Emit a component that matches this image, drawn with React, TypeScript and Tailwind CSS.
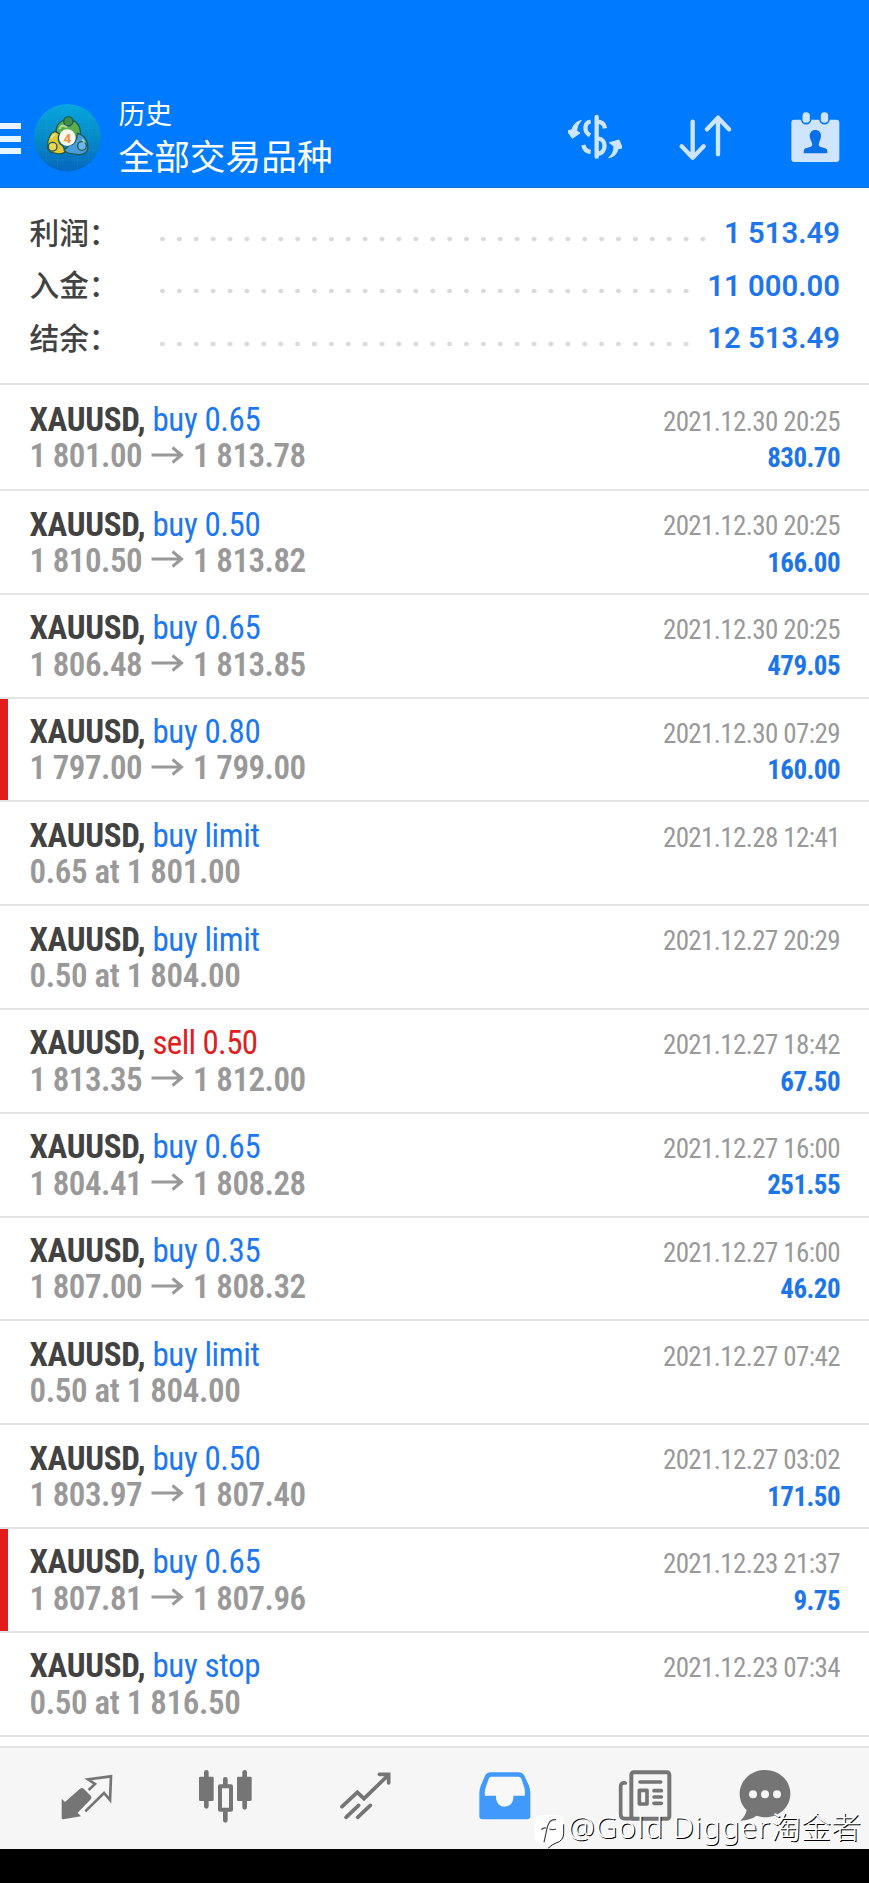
import clsx from "clsx";

type Deal = {
  side: "buy" | "sell";
  label: string;
  from?: string;
  to?: string;
  order?: string;
  time: string;
  profit?: string;
  marked?: boolean;
};

const summary = [
  { label: "利润：", value: "1 513.49", dots: "w-[557.7px]" },
  { label: "入金：", value: "11 000.00", dots: "w-[540.8px]" },
  { label: "结余：", value: "12 513.49", dots: "w-[540.8px]" },
];

const deals: Deal[] = [
  { side: "buy", label: "buy 0.65", from: "1 801.00", to: "1 813.78", time: "2021.12.30 20:25", profit: "830.70" },
  { side: "buy", label: "buy 0.50", from: "1 810.50", to: "1 813.82", time: "2021.12.30 20:25", profit: "166.00" },
  { side: "buy", label: "buy 0.65", from: "1 806.48", to: "1 813.85", time: "2021.12.30 20:25", profit: "479.05" },
  { side: "buy", label: "buy 0.80", from: "1 797.00", to: "1 799.00", time: "2021.12.30 07:29", profit: "160.00", marked: true },
  { side: "buy", label: "buy limit", order: "0.65 at 1 801.00", time: "2021.12.28 12:41" },
  { side: "buy", label: "buy limit", order: "0.50 at 1 804.00", time: "2021.12.27 20:29" },
  { side: "sell", label: "sell 0.50", from: "1 813.35", to: "1 812.00", time: "2021.12.27 18:42", profit: "67.50" },
  { side: "buy", label: "buy 0.65", from: "1 804.41", to: "1 808.28", time: "2021.12.27 16:00", profit: "251.55" },
  { side: "buy", label: "buy 0.35", from: "1 807.00", to: "1 808.32", time: "2021.12.27 16:00", profit: "46.20" },
  { side: "buy", label: "buy limit", order: "0.50 at 1 804.00", time: "2021.12.27 07:42" },
  { side: "buy", label: "buy 0.50", from: "1 803.97", to: "1 807.40", time: "2021.12.27 03:02", profit: "171.50" },
  { side: "buy", label: "buy 0.65", from: "1 807.81", to: "1 807.96", time: "2021.12.23 21:37", profit: "9.75", marked: true },
  { side: "buy", label: "buy stop", order: "0.50 at 1 816.50", time: "2021.12.23 07:34" },
];

function Avatar() {
  return (
    <svg className="ml-[9px] size-[75px] shrink-0" viewBox="0 0 225 225" aria-hidden="true">
      <defs>
        <linearGradient id="disc" x1="0" y1="0" x2="0" y2="1">
          <stop offset="0" stopColor="#08a6e0" />
          <stop offset="0.5" stopColor="#078bc8" />
          <stop offset="1" stopColor="#0666bd" />
        </linearGradient>
      </defs>
      <circle cx="112" cy="113" r="101" fill="url(#disc)" />
      <path d="M50 45V185M82 20V205M142 20V205M175 45V185M20 85H205M20 150H205M35 180H190" stroke="#3ab0dd" strokeOpacity="0.2" strokeWidth="2" />
      <g stroke="#1c5a54" strokeWidth="4">
        <path d="M78 104C76 76 90 60 114 58C140 60 154 78 151 108L132 116C128 92 98 90 92 104Z" fill="#59ad4c" />
        <path d="M76 94C60 98 53 118 53 138C50 152 62 158 78 160C92 164 106 160 106 152L98 138C84 130 82 112 88 102Z" fill="#e8c832" />
        <path d="M142 100C164 104 174 124 174 144C172 160 156 166 138 163C122 162 108 160 102 150L118 136C132 134 142 120 142 100Z" fill="#4a9cd8" />
        <circle cx="115" cy="64" r="14" fill="#3f8f48" />
        <circle cx="68" cy="140" r="13" fill="#efd755" />
        <circle cx="156" cy="138" r="13" fill="#68b6ec" />
      </g>
      <path d="M88 88C94 70 106 80 112 82M64 116C66 108 70 104 76 104M156 118C160 122 162 124 163 128" fill="none" stroke="#d6f0b0" strokeOpacity="0.7" strokeWidth="6" />
      <circle cx="112" cy="113" r="25" fill="#fbf8f2" />
      <text x="112" y="128" textAnchor="middle" className="font-[Roboto] text-[41px] font-bold" fill="#f0923c">
        4
      </text>
    </svg>
  );
}

function HeaderActions() {
  return (
    <div className="ml-auto flex gap-[55.6px] pr-[27.5px] text-[#cfe5ff]">
      <svg className="size-[54px]" viewBox="83 60 162 162" fill="none" stroke="currentColor" aria-hidden="true">
        <path d="M169 81V200" strokeWidth="13" strokeLinecap="round" />
        <path d="M172 95Q191 96 194 115M172 146C199 144 200 190 172 191" strokeWidth="13" />
        <path d="M151 95C133 97 128 124 149 136M129 165Q133 184 151 186" strokeWidth="13" />
        <path d="M123 92C108 94 99 104 95 119L81 123L96 145L119 129L109 123C110 110 114 100 123 92Z" fill="currentColor" strokeWidth="3" strokeLinejoin="round" />
        <path d="M205 203C220 201 230 192 233 176L246 174L236 150L207 158L221 169C221 184 216 195 205 203Z" fill="currentColor" strokeWidth="3" strokeLinejoin="round" />
      </svg>
      <svg className="size-[54px]" viewBox="411 60 162 162" fill="none" stroke="currentColor" strokeWidth="13" strokeLinecap="round" strokeLinejoin="round" aria-hidden="true">
        <path d="M455 95V203M422 169L455 203L488 169" />
        <path d="M531 193V84M498 118L531 83L564 118" />
      </svg>
      <svg className="size-[54px]" viewBox="740 60 162 162" aria-hidden="true">
        <rect x="750" y="89" width="144" height="127" rx="9" fill="currentColor" />
        <rect x="781" y="64" width="27" height="37" rx="13" fill="currentColor" stroke="#007aff" strokeWidth="5" />
        <rect x="836" y="64" width="27" height="37" rx="13" fill="currentColor" stroke="#007aff" strokeWidth="5" />
        <path d="M822 120C833 120 840 128 839 139C838 150 833 156 832 165C834 173 846 172 855 176Q858 178 858 190H787Q787 178 790 176C799 172 810 173 813 165C812 156 806 150 805 139C805 128 811 120 822 120Z" fill="#0a70e8" />
      </svg>
    </div>
  );
}

function Arrow() {
  return (
    <svg className="mx-[9px] -mt-[4px] h-[18px] w-[33px]" viewBox="0 0 33 18" fill="none" stroke="currentColor" strokeWidth="3" aria-hidden="true">
      <path d="M0.5 9H31M21.5 1.5L30.5 9L21.5 16.5" />
    </svg>
  );
}

function DealRow({ deal, first }: { deal: Deal; first: boolean }) {
  return (
    <li
      className={clsx(
        "flex border-b-2 border-[#e4e4e4] font-['Roboto_Condensed']",
        first ? "h-[106px]" : "h-[103.8px]",
      )}
    >
      <div className={clsx("w-2", deal.marked && "bg-[#e51c1c]")} />
      <div className={clsx("flex flex-1 justify-between pr-[29px] pl-[21.5px] leading-[36.3px]", first ? "pt-[17.2px]" : "pt-[15.5px]")}>
        <div className="text-[33px]">
          <p className="whitespace-pre text-[#424242]">
            <span className="font-bold tracking-[-0.35px]">XAUUSD, </span>
            <span
              className={
                deal.side === "sell" ? "tracking-[-0.65px] text-[#e02020]" : "tracking-[-0.4px] text-[#1d78ee]"
              }
            >
              {deal.label}
            </span>
          </p>
          {deal.order ? (
            <p className="font-semibold tracking-[-0.35px] text-[#999]">{deal.order}</p>
          ) : (
            <p className="flex items-center font-semibold tracking-[-0.5px] text-[#999]">
              {deal.from}
              <Arrow />
              {deal.to}
            </p>
          )}
        </div>
        <div className="pt-[1.8px] text-right text-[27px]">
          <p className="tracking-[-0.6px] text-[#999]">{deal.time}</p>
          <p className="font-bold tracking-[-0.55px] text-[#1d76e8]">{deal.profit}</p>
        </div>
      </div>
    </li>
  );
}

function TabBar() {
  return (
    <nav className="flex h-[103px] border-t-2 border-[#e4e4e4] bg-[#f6f6f6] pt-[21px] pl-[17px] text-[#757575]">
      <div className="flex w-[139.5px] justify-center">
        <svg className="size-[54px]" viewBox="179 118 162 162" aria-hidden="true">
          <path d="M184 207L194 217L238 178Q245 172 251 178L271 198Q276 204 270 210L232 249L242 260L189 269Q184 269 184 264Z" fill="currentColor" />
          <path d="M265 181L284 163L263 149L332 140L329 211L311 190L255 245" fill="none" stroke="currentColor" strokeWidth="8" />
        </svg>
      </div>
      <div className="flex w-[139.5px] justify-center">
        <svg className="size-[54px]" viewBox="598 118 162 162" fill="currentColor" aria-hidden="true">
          <path d="M620 128V230M735 128V233M677 149V168M677 243V272" stroke="currentColor" strokeWidth="14" strokeLinecap="round" />
          <rect x="598" y="141" width="44" height="73" rx="4" />
          <rect x="712" y="141" width="44" height="73" rx="4" />
          <rect x="661" y="170" width="33" height="70" fill="#f6f6f6" stroke="currentColor" strokeWidth="12" strokeLinejoin="round" />
        </svg>
      </div>
      <div className="flex w-[139.5px] justify-center">
        <svg className="size-[54px]" viewBox="1016 118 162 162" fill="none" stroke="currentColor" strokeWidth="11" strokeLinecap="round" aria-hidden="true">
          <path d="M1025 231L1071 188L1091 207L1162 138M1137 134H1165V160" />
          <path d="M1037 263L1075 227M1072 263L1110 227" />
        </svg>
      </div>
      <div className="flex w-[139.5px] justify-center">
        <svg className="size-[54px]" viewBox="132 118 162 162" aria-hidden="true">
          <path d="M168 128H255Q265 128 270 136L284 166Q289 178 289 190V260Q289 269 280 269H145Q136 269 136 260V190Q136 178 141 166L154 136Q159 128 168 128Z" fill="#4299fc" />
          <path d="M172 141H253Q259 141 262 147L271 174Q274 184 272 198H238V205A26 26 0 0 1 186 205V198H153Q151 184 155 174L164 147Q167 141 172 141Z" fill="#f8f8f8" />
        </svg>
      </div>
      <div className="flex w-[139.5px] justify-center">
        <svg className="size-[54px]" viewBox="551 118 162 162" fill="none" stroke="currentColor" strokeWidth="12" aria-hidden="true">
          <rect x="591" y="128" width="114" height="139" rx="7" />
          <path d="M573 160Q559 158 559 170V254Q559 267 571 267H597" strokeWidth="11" strokeLinecap="round" />
          <path d="M617 157H679M659 183H681M659 202H681M659 221H681" strokeWidth="11" strokeLinecap="round" />
          <rect x="615" y="182" width="23" height="41" strokeWidth="11" strokeLinejoin="round" />
        </svg>
      </div>
      <div className="flex w-[100px] justify-center">
        <svg className="size-[54px]" viewBox="911 118 162 162" aria-hidden="true">
          <path d="M992 121C1036 121 1068 153 1068 192C1068 232 1035 262 993 263Q979 263 967 258Q947 272 918 273Q933 260 937 241C923 228 916 211 916 192C916 153 950 121 992 121Z" fill="currentColor" />
          <g fill="#f6f6f6">
            <circle cx="956" cy="194" r="12" />
            <circle cx="992" cy="194" r="12" />
            <circle cx="1028" cy="194" r="12" />
          </g>
        </svg>
      </div>
    </nav>
  );
}

function Watermark() {
  return (
    <div className="absolute top-[1806px] left-[534px] flex whitespace-nowrap text-white">
      <svg className="mt-[9px] h-[42px] w-[33px]" viewBox="0 12 99 126" aria-hidden="true">
        <path d="M24 12H66Q89 12 89 36V66Q89 90 66 96Q58 98 42 112V98H24Q1 96 1 72V36Q1 12 24 12Z" fill="#fff" />
        <path d="M66 26C52 24 44 32 40 48L30 94M22 56Q30 48 36 52M46 54Q56 58 66 54" fill="none" stroke="#444" strokeWidth="3.5" />
        <path d="M89 40V68Q88 90 66 96Q56 99 42 112" fill="none" stroke="#222" strokeWidth="3" />
      </svg>
      <p className="ml-px font-['Noto_Sans','Noto_Sans_CJK_SC',sans-serif] text-[30px] leading-[42px] font-light [text-shadow:1px_1px_0_#000]">
        <span className="tracking-[0.95px]">@Gold Digger</span>
        <span>淘金者</span>
      </p>
    </div>
  );
}

export default function App() {
  return (
    <div className="relative flex h-[1883px] w-[869px] flex-col overflow-hidden bg-white">
      <header className="flex h-[188px] items-center border-b border-[#1a70d0] bg-[#007aff] pt-[87px] text-white">
        <div className="mt-[3px] flex flex-col gap-[6.5px]">
          <span className="h-[6px] w-[21px] bg-[#e8f4ff]" />
          <span className="h-[6px] w-[21px] bg-[#e8f4ff]" />
          <span className="h-[6px] w-[21px] bg-[#e8f4ff]" />
        </div>
        <Avatar />
        <div className="ml-[13.5px] font-['Noto_Sans_CJK_SC',sans-serif]">
          <p className="text-[26.8px] leading-[36px]">历史</p>
          <p className="text-[35.7px] leading-[48px]">全部交易品种</p>
        </div>
        <HeaderActions />
      </header>

      <section className="h-[197px] border-b-2 border-[#e4e4e4] pt-[20px] pr-[29px] pl-[29.5px]">
        {summary.map((row) => (
          <div key={row.label} className="flex h-[52.5px] items-center">
            <span className="-mt-[5px] w-[124px] font-['Noto_Sans_CJK_SC',sans-serif] text-[29.7px] leading-[48px] font-medium text-[#424242]">
              {row.label}
            </span>
            <span
              className={clsx(
                "mt-[9px] h-[6px] bg-[radial-gradient(circle,#dadada_2px,transparent_2.7px)] bg-[length:16.9px_6px] bg-repeat-x",
                row.dots,
              )}
            />
            <span className="ml-auto font-[Roboto] text-[29.3px] font-semibold text-[#1f76ea]">{row.value}</span>
          </div>
        ))}
      </section>

      <ul>
        {deals.map((deal, i) => (
          <DealRow key={i} deal={deal} first={i === 0} />
        ))}
      </ul>

      <div className="mt-auto">
        <TabBar />
        <div className="h-[34px] bg-black" />
      </div>
      <Watermark />
    </div>
  );
}
